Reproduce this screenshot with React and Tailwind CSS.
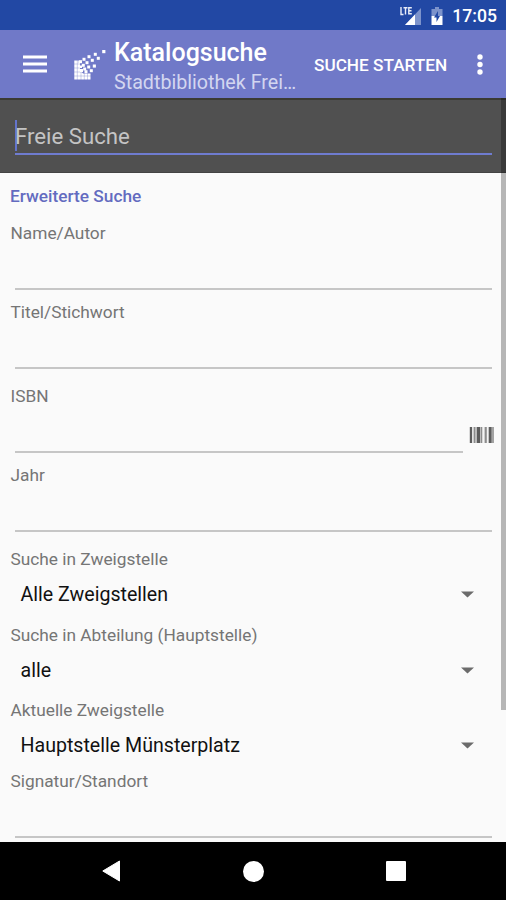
import clsx from "clsx"

const branches = {
  branch: "Alle Zweigstellen",
  department: "alle",
  current: "Hauptstelle Münsterplatz",
}

// [x, y, size] of the squares in the library logo
const logoDots = [
  [28.2, 2, 3.2], [19.8, 4.8, 3], [22.8, 8.8, 3], [13.5, 7.2, 3], [16.8, 10.8, 3],
  [8.5, 9.8, 3], [11.5, 13.2, 3], [18.8, 16.500, 3.1], [13.2, 17.500, 3], [15.8, 21.2, 3],
  [10.500, 22.2, 3], [5, 12.2, 3], [7.8, 15.8, 3], [9.2, 19.500, 3], [5.500, 17.500, 2.5], [6, 21, 3],
]

const StatusBar = () => (
  <div className="flex h-[30px] shrink-0 items-center justify-end bg-[#2248a4] pt-px pr-[9px] text-white">
    <svg className="h-[20px] w-[22px]" viewBox="0 0 22 20">
      <path d="M22 2v17H6z" fill="#7d93cb" />
      <path d="M16 8.500V19H6z" fill="#fff" />
      <path d="M2 1v7.500h2.500M4.500 1.700h4M6.500 1.700v6.800M12.800 1.700H9.800v6.100h3M9.800 4.700h2.700" fill="none" stroke="#e9edf8" strokeWidth="1.4" />
    </svg>
    <svg className="ml-[10px] h-[18px] w-[12px]" viewBox="0 0 12 18">
      <path d="M4 0h4v2h3.500v7H.5V2H4z" fill="#7d93cb" />
      <path d="M.5 9h11v9H.5z" fill="#fff" />
      <path d="M7 4 3 10.500h2.500V15L9 9H7z" fill="#2248a4" />
    </svg>
    <span className="ml-[9px] text-[17.6px] leading-[20px] font-medium">17:05</span>
  </div>
)

const AppBar = () => (
  <header className="flex h-[68px] shrink-0 items-center bg-[#7079c8] text-white">
    <svg className="ml-[23px] h-[18px] w-[24px]" viewBox="0 0 24 18" fill="#fff">
      <path d="M0 .5h24v3H0zM0 7.500h24v3H0zM0 14.500h24v3H0z" />
    </svg>
    <svg className="ml-[27px] h-[32px] w-[34px]" viewBox="0 0 34 32" fill="#fff">
      <path d="M.3 12.500h4.500V15H6v7l3 3.500h7.500v6H.3z" />
      <path d="M0 16h6M0 20h6M0 24h8M0 28h17M3.300 12v20M7 22v10M10.300 25v7M13.500 25v7" stroke="#7079c8" strokeWidth=".35" />
      {logoDots.map(([x, y, size]) => (
        <rect key={`${x}-${y}`} x={x} y={y} width={size} height={size} />
      ))}
    </svg>
    <div className="ml-[6px] w-[186px] pt-[7px] whitespace-nowrap">
      <h1 className="text-[25px] leading-[30px] font-medium">Katalogsuche</h1>
      <p className="text-[19.7px] leading-[30px] text-[#d3d6f0]">Stadtbibliothek Frei…</p>
    </div>
    <button className="ml-[14px] w-[134px] pt-px text-left text-[17.2px] leading-[24px] font-medium whitespace-nowrap">
      SUCHE STARTEN
    </button>
    <svg className="ml-[28px] h-[22px] w-[8px]" viewBox="0 0 8 22" fill="#fff">
      <circle cx="4" cy="4" r="2.700" />
      <circle cx="4" cy="11.500" r="2.700" />
      <circle cx="4" cy="19" r="2.700" />
    </svg>
  </header>
)

const TextField = ({ label, className, children }) => (
  <div className={clsx("h-[79px]", className)}>
    <label className="block h-[20px] pl-[10.5px] text-[17.3px] leading-[20px] text-[#757575]">{label}</label>
    <div className="flex pr-[14px] pl-[15px]">
      <div className="h-[47px] flex-1 border-b-2 border-[#c6c6c6]"></div>
      {children}
    </div>
  </div>
)

const Spinner = ({ label, value, className }) => (
  <div className={className}>
    <label className="block h-[20px] pl-[10.5px] text-[17.3px] leading-[20px] text-[#757575]">{label}</label>
    <div className="flex h-[50px] items-center justify-between pr-[32px] pl-[20.5px]">
      <span className="pt-[2px] text-[19.6px] leading-[24px] text-[#111]">{value}</span>
      <svg className="h-[7px] w-[13px]" viewBox="0 0 13 7">
        <path d="M0 .5h13L6.500 6.500z" fill="#6b6b6b" />
      </svg>
    </div>
  </div>
)

const Barcode = () => (
  <svg className="mt-[21px] ml-[6px] h-[16px] w-[26px]" viewBox="0 0 26 16">
    <path d="M.5 0H25v16H.5z" fill="#bbb" />
    <path d="M1 0h2v16H1zM8 0h3v16H8zM20 0h2.500v16H20z" fill="#5c5c5c" />
    <path d="M5 0h1v16H5zM12 0h1v16h-1zM16 0h1.500v16H16zM23.500 0h1v16h-1z" fill="#8c8c8c" />
    <path d="M3.300 0h1v16h-1zM13.500 0h1.800v16h-1.800zM18 0h1.200v16H18z" fill="#f4f4f4" />
  </svg>
)

const NavBar = () => (
  <nav className="flex h-[58px] shrink-0 items-center bg-black pl-[102px]">
    <svg className="h-[22px] w-[19px]" viewBox="0 0 19 22">
      <path d="M17.500 1v20L.8 11z" fill="#fff" stroke="#fff" strokeLinejoin="round" />
    </svg>
    <div className="ml-[122px] h-[21px] w-[21px] rounded-full bg-white"></div>
    <div className="ml-[122px] h-[20px] w-[20px] rounded-[1px] bg-white"></div>
  </nav>
)

export default function App() {
  return (
    <div className="relative flex h-[900px] w-[506px] flex-col overflow-hidden bg-[#fafafa] font-[Roboto,sans-serif]">
      <StatusBar />
      <AppBar />

      <div className="h-[75px] shrink-0 border-t-2 border-b border-t-[#3b3b33] border-b-[#444] bg-[#505050] pt-[20px] pl-[15px]">
        <div className="flex h-[35px] w-[477px] border-b-2 border-[#6f7cd0]">
          <div className="h-[31px] w-[2px] bg-[#6474cc]"></div>
          <span className="-ml-[2px] text-[22.2px] leading-[33px] text-[#c4c4c4]">Freie Suche</span>
        </div>
      </div>

      <main className="min-h-0 flex-1 overflow-hidden">
        <h2 className="mt-[13px] mb-[16px] pl-[10px] text-[17.3px] leading-[21px] font-medium text-[#636bc0]">
          Erweiterte Suche
        </h2>
        <TextField label="Name/Autor" />
        <TextField label="Titel/Stichwort" className="mb-[5px]" />
        <TextField label="ISBN">
          <div className="-mr-[3px]">
            <Barcode />
          </div>
        </TextField>
        <TextField label="Jahr" className="mb-[5px]" />
        <Spinner label="Suche in Zweigstelle" value={branches.branch} className="h-[76px]" />
        <Spinner label="Suche in Abteilung (Hauptstelle)" value={branches.department} className="h-[75px]" />
        <Spinner label="Aktuelle Zweigstelle" value={branches.current} className="h-[71px]" />
        <TextField label="Signatur/Standort" />
      </main>

      {/* scroll indicator */}
      <div className="absolute top-[98px] right-0 h-[612px] w-[5px] bg-black/27"></div>

      <NavBar />
    </div>
  )
}
